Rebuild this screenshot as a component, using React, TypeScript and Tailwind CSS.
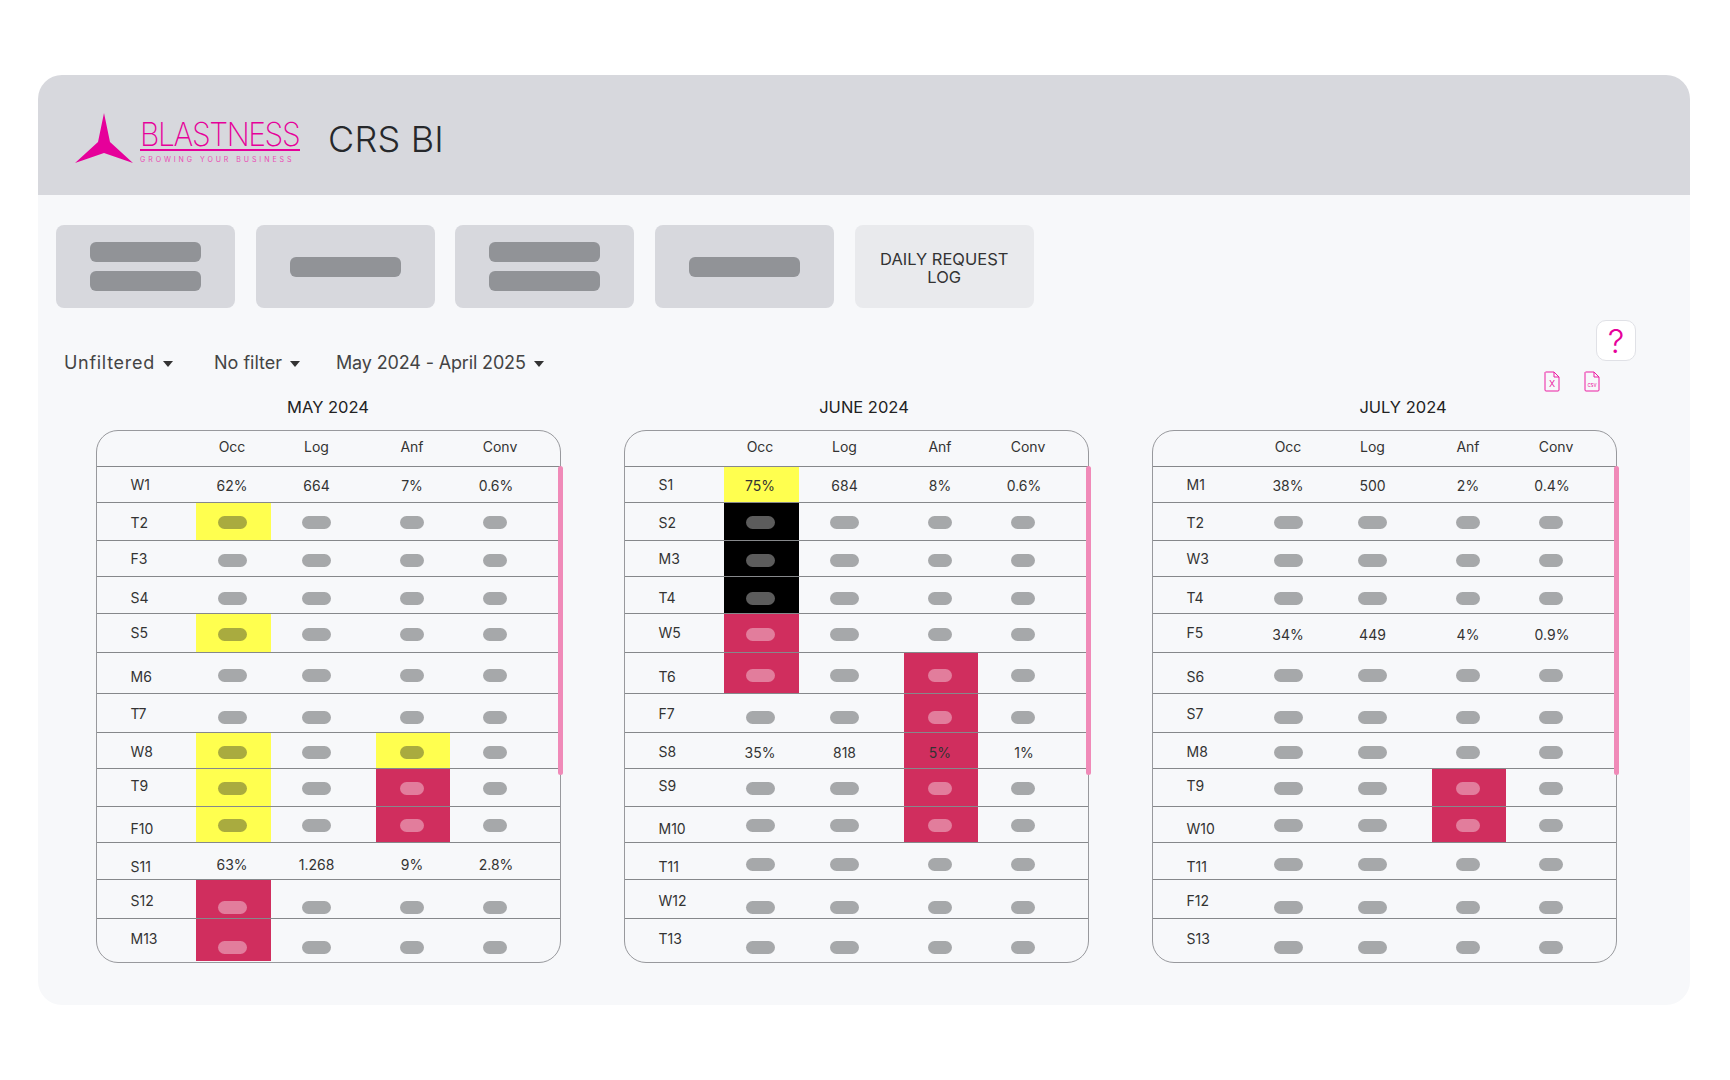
const font = { sans: "font-['Inter',sans-serif]" }

type Tone = 'yellow' | 'red' | 'black'

interface MonthData {
  title: string
  titleClass: string
  labels: string[]
  values: Record<number, string[]>
  occ: Record<number, Tone>
  anf: Record<number, Tone>
}

const months: MonthData[] = [
  {
    title: 'MAY 2024',
    titleClass: 'translate-x-0',
    labels: ['W1', 'T2', 'F3', 'S4', 'S5', 'M6', 'T7', 'W8', 'T9', 'F10', 'S11', 'S12', 'M13'],
    values: { 0: ['62%', '664', '7%', '0.6%'], 10: ['63%', '1.268', '9%', '2.8%'] },
    occ: { 1: 'yellow', 4: 'yellow', 7: 'yellow', 8: 'yellow', 9: 'yellow', 11: 'red', 12: 'red' },
    anf: { 7: 'yellow', 8: 'red', 9: 'red' },
  },
  {
    title: 'JUNE 2024',
    titleClass: 'translate-x-[8px]',
    labels: ['S1', 'S2', 'M3', 'T4', 'W5', 'T6', 'F7', 'S8', 'S9', 'M10', 'T11', 'W12', 'T13'],
    values: { 0: ['75%', '684', '8%', '0.6%'], 7: ['35%', '818', '5%', '1%'] },
    occ: { 0: 'yellow', 1: 'black', 2: 'black', 3: 'black', 4: 'red', 5: 'red' },
    anf: { 5: 'red', 6: 'red', 7: 'red', 8: 'red', 9: 'red' },
  },
  {
    title: 'JULY 2024',
    titleClass: 'translate-x-[19px]',
    labels: ['M1', 'T2', 'W3', 'T4', 'F5', 'S6', 'S7', 'M8', 'T9', 'W10', 'T11', 'F12', 'S13'],
    values: { 0: ['38%', '500', '2%', '0.4%'], 4: ['34%', '449', '4%', '0.9%'] },
    occ: {},
    anf: { 8: 'red', 9: 'red' },
  },
]

// row heights and the small vertical nudges of the labels and pills
const rowStyles = [
  { h: 'h-[36px]', label: 'translate-y-0', pill: 'translate-y-[1px]' },
  { h: 'h-[38px]', label: 'translate-y-[1px]', pill: 'translate-y-[1px]' },
  { h: 'h-[36px]', label: 'translate-y-0', pill: 'translate-y-[2px]' },
  { h: 'h-[37px]', label: 'translate-y-[2px]', pill: 'translate-y-[3px]' },
  { h: 'h-[39px]', label: 'translate-y-[-1px]', pill: 'translate-y-[1px]' },
  { h: 'h-[41px]', label: 'translate-y-[3px]', pill: 'translate-y-[2px]' },
  { h: 'h-[39px]', label: 'translate-y-0', pill: 'translate-y-[4px]' },
  { h: 'h-[36px]', label: 'translate-y-[1px]', pill: 'translate-y-[2px]' },
  { h: 'h-[38px]', label: 'translate-y-[-2px]', pill: 'translate-y-[1px]' },
  { h: 'h-[36px]', label: 'translate-y-[4px]', pill: 'translate-y-[1px]' },
  { h: 'h-[37px]', label: 'translate-y-[5px]', pill: 'translate-y-[3px]' },
  { h: 'h-[39px]', label: 'translate-y-[1px]', pill: 'translate-y-[8px]' },
  { h: 'h-[42px]', label: 'translate-y-[-2px]', pill: 'translate-y-[7px]' },
]

const toneBg: Record<Tone, string> = {
  yellow: 'bg-[#ffff4f]',
  red: 'bg-[#d02e5e]',
  black: 'bg-black',
}

const tonePill: Record<Tone, string> = {
  yellow: 'bg-[#a9ab3f]',
  red: 'bg-[#e27d9c]',
  black: 'bg-[#5c5c5c]',
}

const rowGrid = 'grid grid-cols-[99px_75px_105px_74px_1fr]'

function Pill({ wide, tone, nudge }: { wide: boolean; tone?: Tone; nudge: string }) {
  return (
    <span
      className={`block h-[13px] rounded-full ${wide ? 'w-[29px]' : 'w-[24px]'} ${tone ? tonePill[tone] : 'bg-[#a6a8aa]'} ${nudge}`}
    />
  )
}

function MonthTable({ month }: { month: MonthData }) {
  return (
    <div className="w-[465px]">
      <div className={`h-[38px] pt-[3px] text-center text-[16.5px] text-[#222] ${month.titleClass}`}>
        {month.title}
      </div>
      <div className="relative">
        <div className="h-[533px] overflow-hidden rounded-[22px] border border-[#98999d] text-[14px] text-[#333]">
          <div className={`${rowGrid} h-[36px] items-center border-b border-[#86888b] pb-[4px]`}>
            <span />
            <span className="pr-[2px] text-center">Occ</span>
            <span className="pr-[13px] text-center">Log</span>
            <span className="pr-[1px] text-center">Anf</span>
            <span className="pr-[9px] text-center">Conv</span>
          </div>
          {month.labels.map((label, i) => {
            const style = rowStyles[i]
            const values = month.values[i]
            const last = i === month.labels.length - 1
            return (
              <div
                key={label}
                className={`${rowGrid} ${style.h} ${last ? '' : 'border-b border-[#86888b]'}`}
              >
                <div className="flex items-center pl-[34px]">
                  <span className={style.label}>{label}</span>
                </div>
                <div className={`flex items-center justify-center pr-[2px] ${month.occ[i] ? toneBg[month.occ[i]] : ''}`}>
                  {values ? <span className={style.pill}>{values[0]}</span> : <Pill wide tone={month.occ[i]} nudge={style.pill} />}
                </div>
                <div className="flex items-center justify-center pr-[13px]">
                  {values ? <span className={style.pill}>{values[1]}</span> : <Pill wide nudge={style.pill} />}
                </div>
                <div className={`flex items-center justify-center pr-[1px] ${month.anf[i] ? toneBg[month.anf[i]] : ''}`}>
                  {values ? <span className={style.pill}>{values[2]}</span> : <Pill wide={false} tone={month.anf[i]} nudge={style.pill} />}
                </div>
                <div className="flex items-center justify-center pr-[19px]">
                  {values ? <span className={`${style.pill} ml-[2px]`}>{values[3]}</span> : <Pill wide={false} nudge={style.pill} />}
                </div>
              </div>
            )
          })}
        </div>
        <span className="absolute right-[-2px] top-[36px] h-[309px] w-[5px] rounded-full bg-[#f08ab8]" />
      </div>
    </div>
  )
}

function Logo() {
  return (
    <div className="flex items-end gap-[7px]">
      <svg width="58" height="50" viewBox="0 0 58 50" className="mb-[1px] shrink-0">
        <path d="M29 0 L35 29 L58 50 L29 40 L0 50 L23 29 Z" fill="#e6009a" />
      </svg>
      <div className="flex w-[160px] flex-col text-[#e6009a]">
        <span className="h-[29px] origin-left scale-x-[0.91] whitespace-nowrap text-[33px] font-extralight leading-[29px] tracking-[-1.5px]">
          BLASTNESS
        </span>
        <span className="h-[2px] bg-[#e6009a]" />
        <span className="mt-[4px] whitespace-nowrap text-[7px] leading-[9px] tracking-[2.95px] text-[#ea4db5]">
          GROWING YOUR BUSINESS
        </span>
      </div>
    </div>
  )
}

function SkeletonButton({ lines }: { lines: number }) {
  return (
    <div className="flex h-[83px] w-[179px] flex-col items-center justify-center gap-[9px] rounded-[8px] bg-[#d7d8dd]">
      {Array.from({ length: lines }).map((_, i) => (
        <span key={i} className="h-[20px] w-[111px] rounded-[6px] bg-[#919397]" />
      ))}
    </div>
  )
}

function Filter({ label, className }: { label: string; className: string }) {
  return (
    <div className={`flex items-center gap-[8px] text-[18px] text-[#444] ${className}`}>
      <span>{label}</span>
      <svg width="10" height="6" viewBox="0 0 10 6" className="mt-[3px]">
        <path d="M0 0 H10 L5 6 Z" fill="#333" />
      </svg>
    </div>
  )
}

function FileIcon({ label, size }: { label: string; size: number }) {
  return (
    <svg width="16" height="21" viewBox="0 0 16 21" fill="none">
      <path
        d="M1.5 1 H10 L15 6 V19 Q15 20 14 20 H2 Q1 20 1 19 V1.5 Z M10 1 V6 H15"
        stroke="#ec1ea3"
        strokeWidth="1"
      />
      <text x="8" y="15.5" textAnchor="middle" fontSize={size} fontFamily="Inter, sans-serif" fill="#ec1ea3">
        {label}
      </text>
    </svg>
  )
}

export default function App() {
  return (
    <div className={`min-h-[1080px] bg-white px-[38px] pt-[75px] ${font.sans}`}>
      <div className="w-[1652px] overflow-hidden rounded-[24px]">
        <header className="flex h-[120px] items-center gap-[28px] bg-[#d7d8dd] pl-[37px] pt-[7px]">
          <Logo />
          <h1 className="text-[36px] font-light tracking-[0.2px] text-[#26282b]">CRS BI</h1>
        </header>
        <main className="h-[810px] bg-[#f7f8fa] px-[18px] pt-[30px]">
          <div className="flex gap-[20.7px]">
            <SkeletonButton lines={2} />
            <SkeletonButton lines={1} />
            <SkeletonButton lines={2} />
            <SkeletonButton lines={1} />
            <div className="flex h-[83px] w-[179px] items-center justify-center rounded-[8px] bg-[#e9eaed] px-[18px] pt-[3px] text-center text-[16.5px] leading-[18px] text-[#333]">
              DAILY REQUEST LOG
            </div>
          </div>

          <div className="flex h-[84px] justify-between">
            <div className="flex items-start pl-[8px] pt-[41px]">
              <Filter label="Unfiltered" className="w-[150px] tracking-[0.7px]" />
              <Filter label="No filter" className="w-[122px]" />
              <Filter label="May 2024 - April 2025" className="tracking-[-0.15px]" />
            </div>
            <div className="flex flex-col items-end pr-[36px] pt-[12px]">
              <div className="flex h-[41px] w-[40px] items-center justify-center rounded-[10px] border border-[#e0e1e6] bg-white pt-[2px] text-[33px] font-light text-[#e6009a]">
                ?
              </div>
              <div className="mr-[36px] mt-[10px] flex gap-[24px]">
                <FileIcon label="X" size={9} />
                <FileIcon label="csv" size={5.5} />
              </div>
            </div>
          </div>

          <div className="flex gap-[63px] pl-[39.5px]">
            {months.map((month) => (
              <MonthTable key={month.title} month={month} />
            ))}
          </div>
        </main>
      </div>
    </div>
  )
}
